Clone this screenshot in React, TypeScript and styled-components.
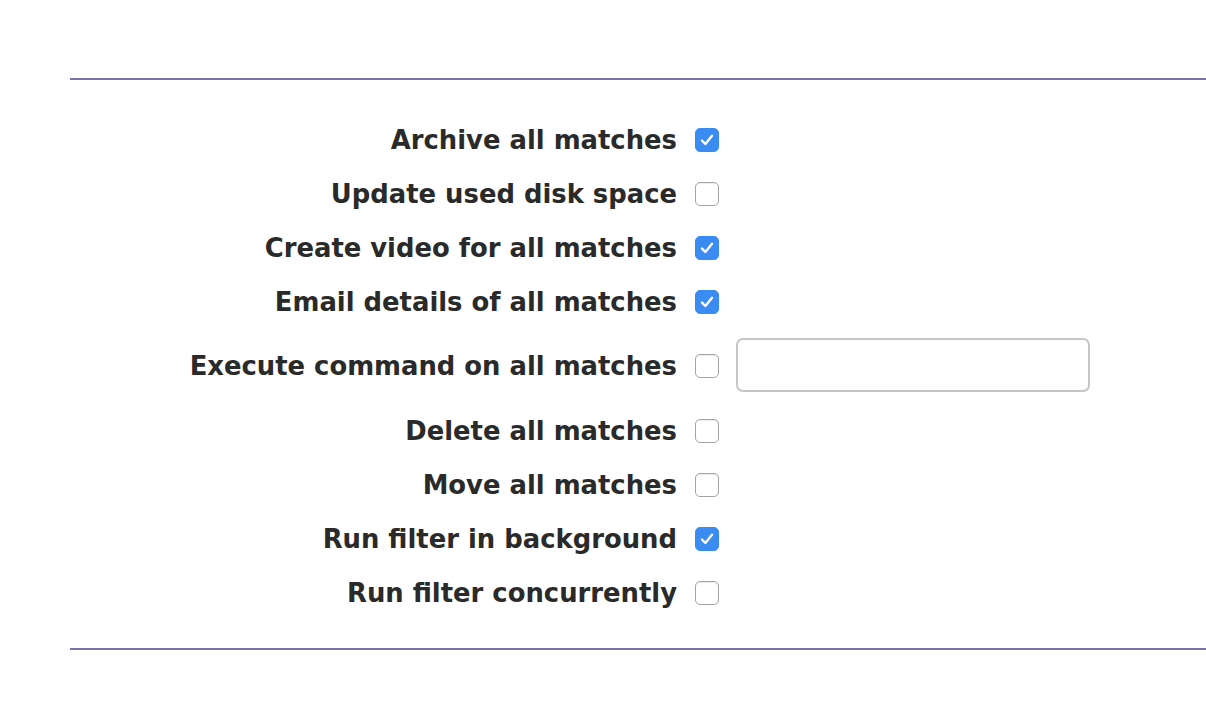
import React from "react";
import styled, { createGlobalStyle } from "styled-components";

const Global = createGlobalStyle`
  html, body { margin: 0; padding: 0; background: #ffffff; }
  body { font-family: "DejaVu Sans", Verdana, sans-serif; }
`;

const Page = styled.div`
  padding: 78px 0 0 70px;
`;

const Divider = styled.hr`
  border: 0;
  border-top: 2px solid #7b74a9;
  margin: 0;
`;

const Options = styled.div`
  display: flex;
  flex-direction: column;
  padding: 33px 0 28px;
`;

const Row = styled.div<{ $tall?: boolean }>`
  display: flex;
  align-items: center;
  height: ${(p) => (p.$tall ? 74 : 54)}px;
  margin-bottom: ${(p) => (p.$tall ? 1 : 0)}px;
`;

const Label = styled.label`
  width: 607px;
  text-align: right;
  font-weight: bold;
  font-size: 25.85px;
  color: #2a2a2a;
  margin-right: 18px;
  white-space: nowrap;
`;

const Box = styled.span<{ $checked: boolean }>`
  box-sizing: border-box;
  width: 24px;
  height: 24px;
  border-radius: 5px;
  display: inline-flex;
  align-items: center;
  justify-content: center;
  background: ${(p) => (p.$checked ? "#3a8cf2" : "#ffffff")};
  border: 1px solid ${(p) => (p.$checked ? "#3a8cf2" : "#a4a4a4")};
  box-shadow: ${(p) => (p.$checked ? "none" : "inset 0 1px 1px rgba(0,0,0,0.08)")};
`;

const TextInput = styled.input`
  box-sizing: border-box;
  margin: 0 0 2px 17px;
  width: 354px;
  height: 54px;
  border: 2px solid #c6c6c6;
  border-radius: 7px;
  outline: none;
  font-size: 18px;
  padding: 0 10px;
`;

const Check = () => (
  <svg width="18" height="18" viewBox="0 0 18 18" fill="none">
    <path d="M4 9.6 L7.4 13 L14 4.8" stroke="#ffffff" strokeWidth="2.4" strokeLinecap="round" strokeLinejoin="round" />
  </svg>
);

const items: { label: string; checked: boolean; input?: boolean }[] = [
  { label: "Archive all matches", checked: true },
  { label: "Update used disk space", checked: false },
  { label: "Create video for all matches", checked: true },
  { label: "Email details of all matches", checked: true },
  { label: "Execute command on all matches", checked: false, input: true },
  { label: "Delete all matches", checked: false },
  { label: "Move all matches", checked: false },
  { label: "Run filter in background", checked: true },
  { label: "Run filter concurrently", checked: false },
];

export default function App() {
  return (
    <Page>
      <Global />
      <Divider />
      <Options>
        {items.map((it) => (
          <Row key={it.label} $tall={it.input}>
            <Label>{it.label}</Label>
            <Box $checked={it.checked}>{it.checked && <Check />}</Box>
            {it.input && <TextInput type="text" />}
          </Row>
        ))}
      </Options>
      <Divider />
    </Page>
  );
}
